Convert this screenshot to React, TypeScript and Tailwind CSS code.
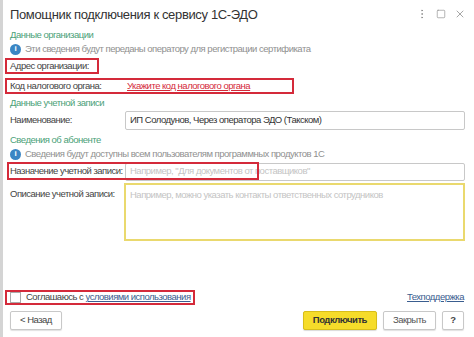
import { MoreVertical, Square, X } from "lucide-react";

const font = { fontFamily: '"Liberation Sans", Arial, sans-serif' };

function InfoIcon() {
  return (
    <span className="flex h-[11px] w-[11px] shrink-0 items-center justify-center rounded-full bg-[#3a86c4] text-[8px] font-bold leading-none tracking-normal text-white">
      i
    </span>
  );
}

function SectionTitle({ children }: { children: string }) {
  return <div className="flex h-[14px] items-center text-[#4b9f78]">{children}</div>;
}

export default function App() {
  return (
    <div
      className="flex h-[337px] w-[474px] flex-col overflow-hidden whitespace-nowrap border-l-[3px] border-[#d4d4d4] bg-white text-[9.5px] tracking-[-0.5px] text-[#444]"
      style={font}
    >
      {/* header */}
      <div className="flex h-[28px] items-center pl-[7px] pr-[8px]">
        <div className="flex-1 text-[13px] leading-none tracking-[-0.35px] text-[#333]">
          Помощник подключения к сервису 1С-ЭДО
        </div>
        <div className="flex items-center gap-[8px] text-[#888]">
          <MoreVertical size={12} strokeWidth={1.5} />
          <Square size={10} strokeWidth={1.5} />
          <X size={12} strokeWidth={1.5} />
        </div>
      </div>

      <div className="flex flex-col pl-[7px] pr-[9px]">
        <SectionTitle>Данные организации</SectionTitle>
        <div className="flex h-[14px] items-center gap-[4px] text-[#909090]">
          <InfoIcon />
          <span>Эти сведения будут переданы оператору для регистрации сертификата</span>
        </div>

        <div className="mt-[2px] flex h-[16px] w-[94px] -ml-[5px] items-center border-2 border-[#d42a3a] pl-[3px]">
          Адрес организации:
        </div>

        <div className="mt-[4px] flex h-[16px] w-[289px] -ml-[5px] items-center border-2 border-[#d42a3a] pl-[3px]">
          <span className="w-[117px]">Код налогового органа:</span>
          <span className="text-[#d42a3a] underline">Укажите код налогового органа</span>
        </div>

        <div className="mt-[2px]">
          <SectionTitle>Данные учетной записи</SectionTitle>
        </div>
        <div className="flex h-[20px] items-center">
          <span className="w-[115px]">Наименование:</span>
          <div className="flex h-[19px] flex-1 items-center rounded-[2px] border border-[#c8c8c8] px-[4px] text-[#333]">
            ИП Солодунов, Через оператора ЭДО (Такском)
          </div>
        </div>

        <div className="mt-[3px]">
          <SectionTitle>Сведения об абоненте</SectionTitle>
        </div>
        <div className="flex h-[14px] items-center gap-[4px] text-[#909090]">
          <InfoIcon />
          <span>Сведения будут доступны всем пользователям программных продуктов 1С</span>
        </div>

        <div className="relative mt-[1px] flex h-[19px] items-center">
          <span className="w-[115px]">Назначение учетной записи:</span>
          <div className="flex h-[18px] flex-1 items-center rounded-[2px] border border-[#c8c8c8] px-[4px] text-[#c4c4c4]">
            Например, "Для документов от поставщиков"
          </div>
          <div className="absolute -left-[3px] top-0 h-[18px] w-[252px] border-2 border-[#d42a3a]" />
        </div>

        <div className="mt-[2px] flex h-[58px] items-start">
          <span className="w-[114px] pt-[4px]">Описание учетной записи:</span>
          <div className="h-[58px] flex-1 border-2 border-[#ead96e] px-[4px] pt-[3px] text-[#c4c4c4]">
            Например, можно указать контакты ответственных сотрудников
          </div>
        </div>
      </div>

      <div className="flex-1" />

      {/* footer */}
      <div className="flex h-[15px] items-center justify-between pl-[2px] pr-[10px]">
        <div className="flex h-[15px] w-[190px] items-center gap-[5px] border-2 border-[#d42a3a] pl-[3px]">
          <span className="h-[11px] w-[11px] border border-[#aaa] bg-white" />
          <span>
            Соглашаюсь с <span className="text-[#3a5d8f] underline">условиями использования</span>
          </span>
        </div>
        <span className="text-[#3a5d8f] underline">Техподдержка</span>
      </div>

      <div className="mb-[7px] mt-[6px] flex h-[19px] items-stretch pl-[7px] pr-[10px]">
        <button className="rounded-[2px] border border-[#c8c8c8] bg-white px-[9px] text-[#444] shadow-[0_1px_1px_rgba(0,0,0,0.12)]">
          &lt; Назад
        </button>
        <div className="flex-1" />
        <button className="rounded-[2px] border border-[#d8be1a] bg-[#f6dc2a] px-[9px] font-bold text-[#333] shadow-[0_1px_1px_rgba(0,0,0,0.15)]">
          Подключить
        </button>
        <button className="ml-[6px] rounded-[2px] border border-[#c8c8c8] bg-white px-[9px] text-[#555] shadow-[0_1px_1px_rgba(0,0,0,0.12)]">
          Закрыть
        </button>
        <button className="ml-[6px] w-[22px] rounded-[2px] border border-[#c8c8c8] bg-white font-bold text-[#444] shadow-[0_1px_1px_rgba(0,0,0,0.12)]">
          ?
        </button>
      </div>
    </div>
  );
}
